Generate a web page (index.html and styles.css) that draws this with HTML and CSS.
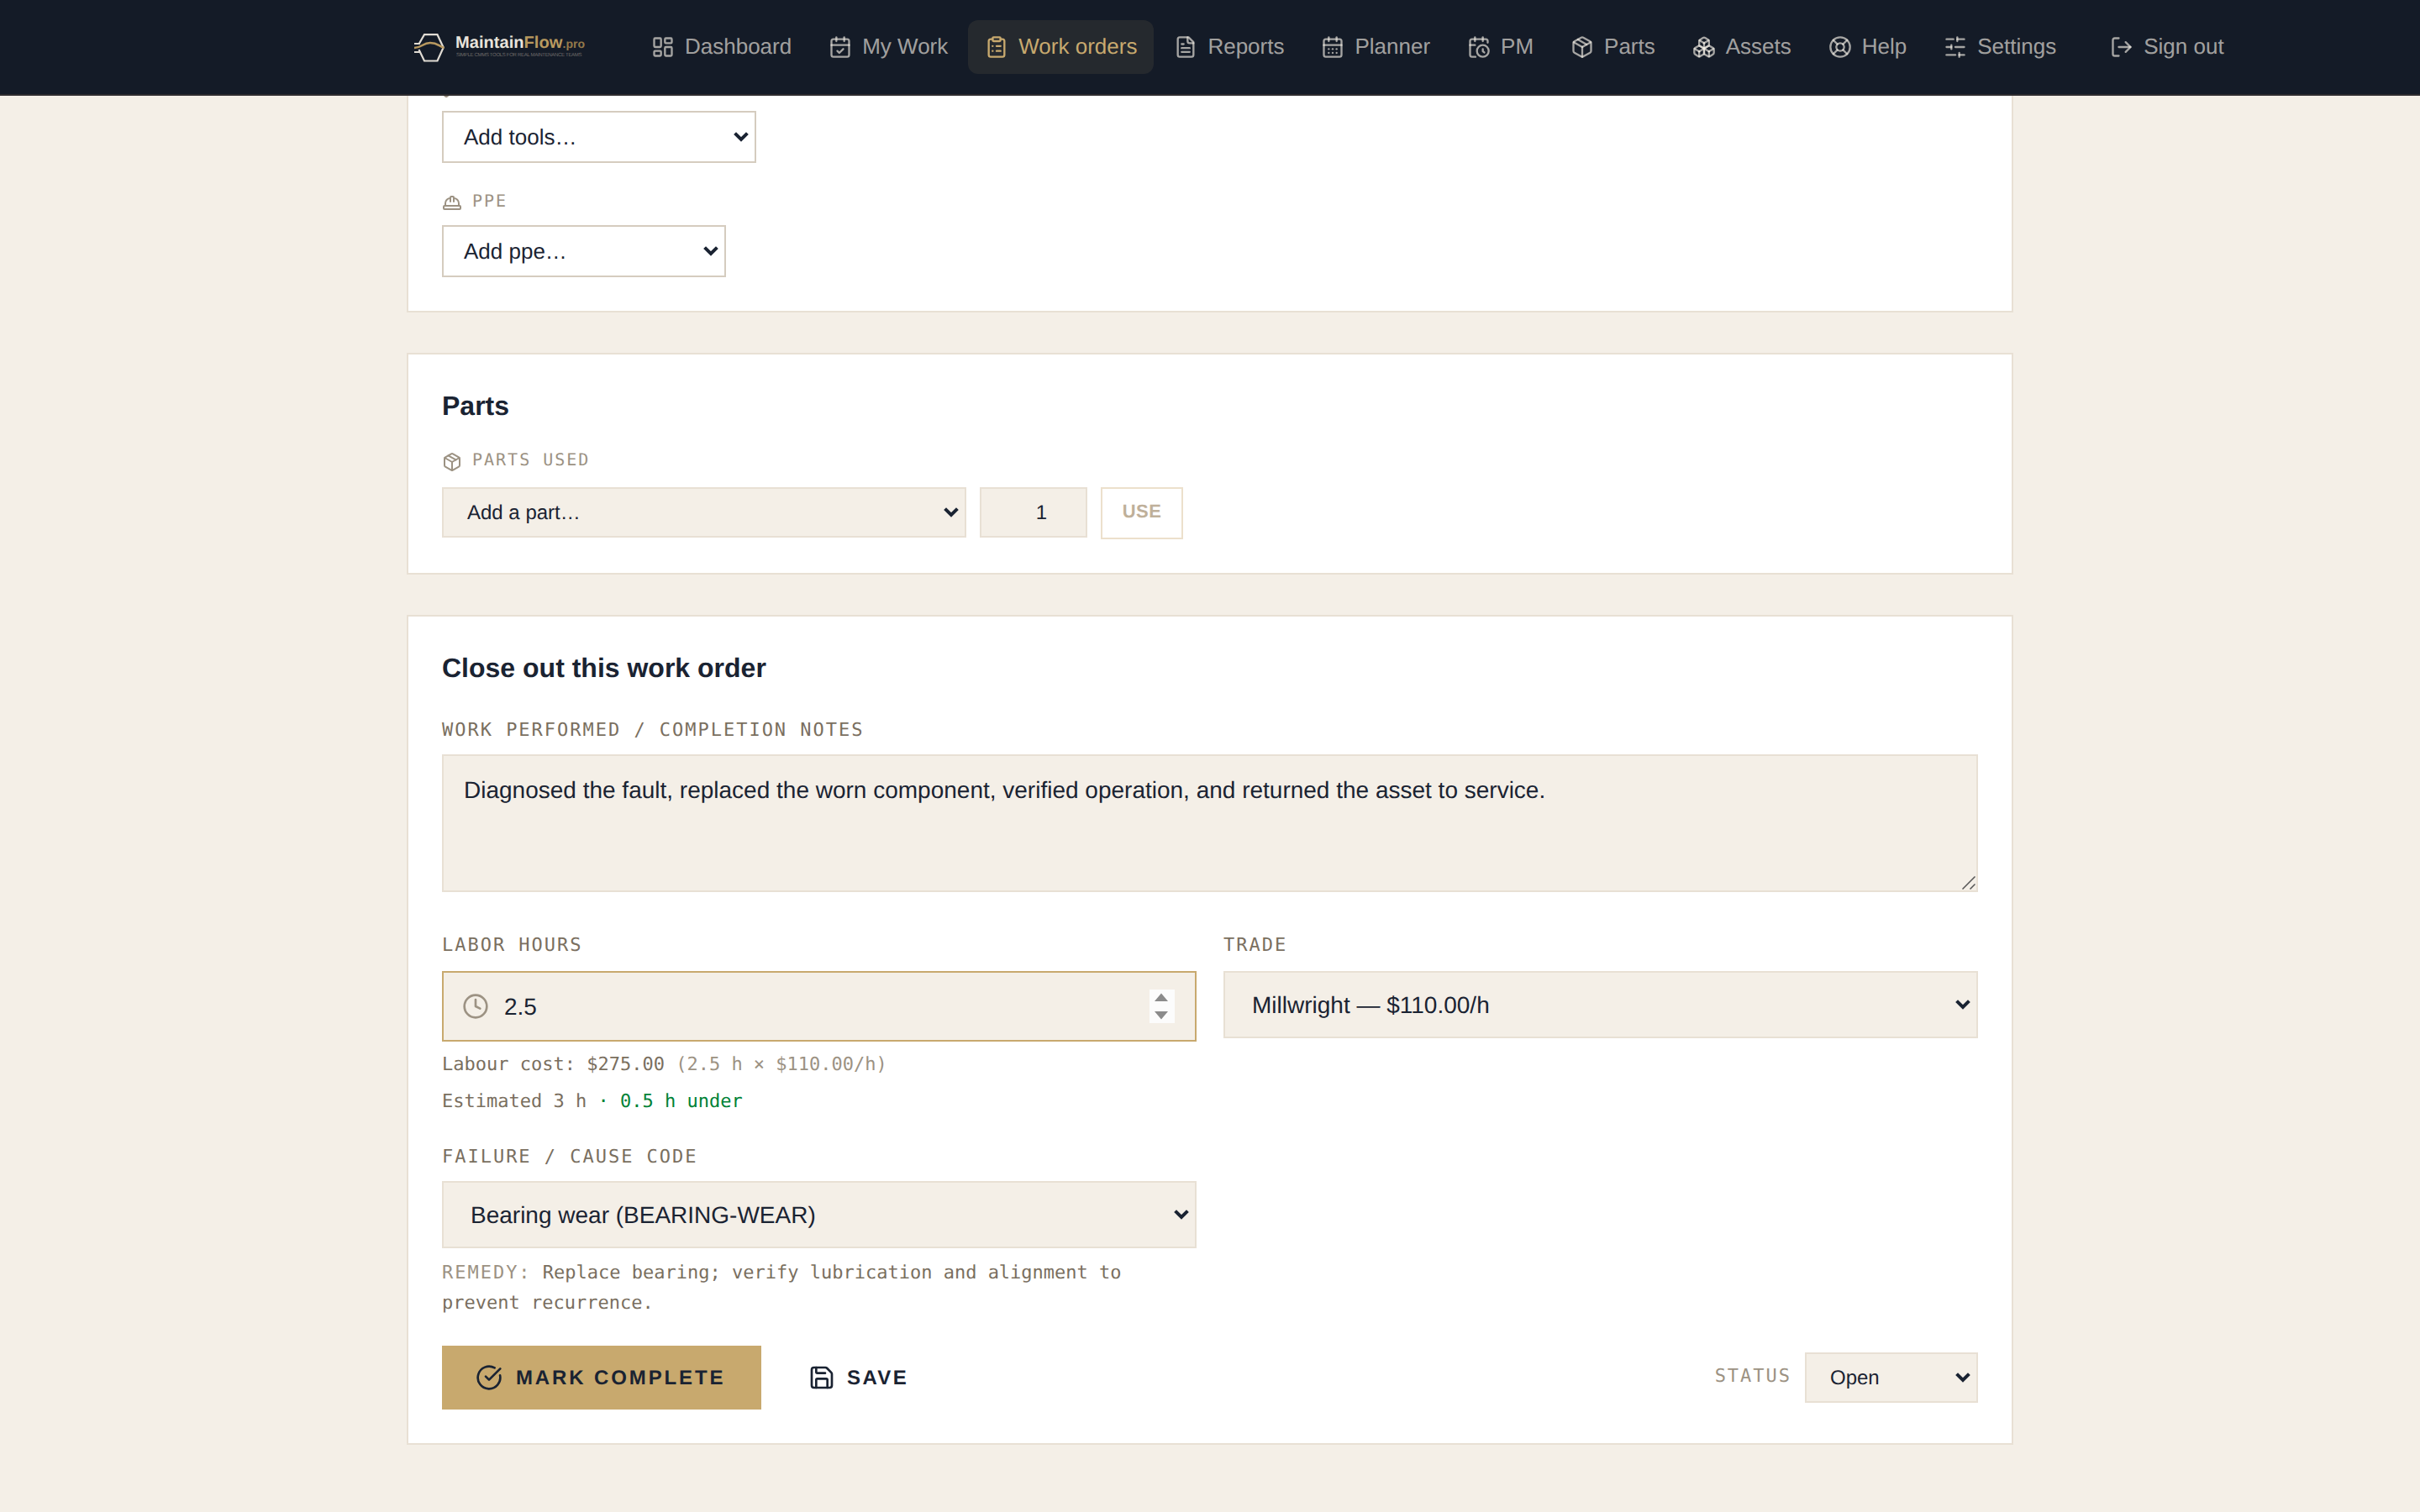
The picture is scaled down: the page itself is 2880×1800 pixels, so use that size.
FILE: index.html
```html
<!DOCTYPE html>
<html lang="en">
<head>
<meta charset="utf-8">
<title>MaintainFlow.pro</title>
<link rel="stylesheet" href="styles.css">
</head>
<body>
<header class="topbar">
  <svg class="logo" viewBox="0 0 230 40" aria-label="MaintainFlow.pro">
    <g fill="none" stroke="#e0dbd3" stroke-width="2.200">
      <path d="M14.5 16.5 21 5.2H36.5L43.700 20.5 36.5 36.500H21L14.500 23"/>
      <path d="M9 16h7M9 26h7.500"/>
      <path d="M9 21C18 21 19 15 28 15S38 19 44.500 21" stroke="#b8995f" stroke-width="2.600"/>
    </g>
    <text class="logo-name" x="58" y="21" textLength="81.500" lengthAdjust="spacingAndGlyphs">Maintain</text>
    <text class="logo-name logo-gold" x="139.500" y="21" textLength="46" lengthAdjust="spacingAndGlyphs">Flow</text>
    <text class="logo-tld" x="185.500" y="21" textLength="26.500" lengthAdjust="spacingAndGlyphs">.pro</text>
    <text class="logo-tag" x="59" y="31" textLength="149.500" lengthAdjust="spacing">SIMPLE CMMS TOOLS FOR REAL MAINTENANCE TEAMS</text>
  </svg>
  <nav class="nav">
    <a class="nav-item"><svg class="icon" viewBox="0 0 24 24"><rect width="7" height="9" x="3" y="3" rx="1"/><rect width="7" height="5" x="14" y="3" rx="1"/><rect width="7" height="9" x="14" y="12" rx="1"/><rect width="7" height="5" x="3" y="16" rx="1"/></svg><span>Dashboard</span></a>
    <a class="nav-item"><svg class="icon" viewBox="0 0 24 24"><path d="M8 2v4"/><path d="M16 2v4"/><rect width="18" height="18" x="3" y="4" rx="2"/><path d="M3 10h18"/><path d="m9 16 2 2 4-4"/></svg><span>My Work</span></a>
    <a class="nav-item nav-active"><svg class="icon" viewBox="0 0 24 24"><rect width="8" height="4" x="8" y="2" rx="1" ry="1"/><path d="M16 4h2a2 2 0 0 1 2 2v14a2 2 0 0 1-2 2H6a2 2 0 0 1-2-2V6a2 2 0 0 1 2-2h2"/><path d="M12 11h4"/><path d="M12 16h4"/><path d="M8 11h.01"/><path d="M8 16h.01"/></svg><span>Work orders</span></a>
    <a class="nav-item"><svg class="icon" viewBox="0 0 24 24"><path d="M15 2H6a2 2 0 0 0-2 2v16a2 2 0 0 0 2 2h12a2 2 0 0 0 2-2V7Z"/><path d="M14 2v4a2 2 0 0 0 2 2h4"/><path d="M10 9H8"/><path d="M16 13H8"/><path d="M16 17H8"/></svg><span>Reports</span></a>
    <a class="nav-item"><svg class="icon" viewBox="0 0 24 24"><path d="M8 2v4"/><path d="M16 2v4"/><rect width="18" height="18" x="3" y="4" rx="2"/><path d="M3 10h18"/><path d="M8 14h.01"/><path d="M12 14h.01"/><path d="M16 14h.01"/><path d="M8 18h.01"/><path d="M12 18h.01"/><path d="M16 18h.01"/></svg><span>Planner</span></a>
    <a class="nav-item"><svg class="icon" viewBox="0 0 24 24"><path d="M21 7.500V6a2 2 0 0 0-2-2H5a2 2 0 0 0-2 2v14a2 2 0 0 0 2 2h3.500"/><path d="M16 2v4"/><path d="M8 2v4"/><path d="M3 10h5"/><path d="M17.500 17.500 16 16.300V14"/><circle cx="16" cy="16" r="6"/></svg><span>PM</span></a>
    <a class="nav-item"><svg class="icon" viewBox="0 0 24 24"><path d="M11 21.730a2 2 0 0 0 2 0l7-4A2 2 0 0 0 21 16V8a2 2 0 0 0-1-1.730l-7-4a2 2 0 0 0-2 0l-7 4A2 2 0 0 0 3 8v8a2 2 0 0 0 1 1.730z"/><path d="M12 22V12"/><path d="M3.290 7 12 12l8.710-5"/><path d="m7.500 4.270 9 5.150"/></svg><span>Parts</span></a>
    <a class="nav-item"><svg class="icon" viewBox="0 0 24 24"><path d="M2.970 12.920A2 2 0 0 0 2 14.630v3.240a2 2 0 0 0 .970 1.710l3 1.800a2 2 0 0 0 2.060 0L12 19v-5.500l-5-3-4.030 2.420Z"/><path d="m7 16.500-4.740-2.850"/><path d="m7 16.500 5-3"/><path d="M7 16.500v5.170"/><path d="M12 13.500V19l3.970 2.380a2 2 0 0 0 2.060 0l3-1.800a2 2 0 0 0 .970-1.710v-3.240a2 2 0 0 0-.970-1.710L17 10.500l-5 3Z"/><path d="m17 16.500-5-3"/><path d="m17 16.500 4.740-2.850"/><path d="M17 16.500v5.170"/><path d="M7.970 4.420A2 2 0 0 0 7 6.130v4.370l5 3 5-3V6.130a2 2 0 0 0-.970-1.710l-3-1.800a2 2 0 0 0-2.060 0l-3 1.800Z"/><path d="M12 8 7.260 5.150"/><path d="m12 8 4.740-2.850"/><path d="M12 13.500V8"/></svg><span>Assets</span></a>
    <a class="nav-item"><svg class="icon" viewBox="0 0 24 24"><circle cx="12" cy="12" r="10"/><path d="m4.930 4.930 4.240 4.240"/><path d="m14.830 9.170 4.240-4.240"/><path d="m14.830 14.830 4.240 4.240"/><path d="m9.170 14.830-4.240 4.240"/><circle cx="12" cy="12" r="4"/></svg><span>Help</span></a>
    <a class="nav-item"><svg class="icon" viewBox="0 0 24 24"><path d="M21 4h-7"/><path d="M10 4H3"/><path d="M21 12h-9"/><path d="M8 12H3"/><path d="M21 20h-5"/><path d="M12 20H3"/><path d="M14 2v4"/><path d="M8 10v4"/><path d="M16 18v4"/></svg><span>Settings</span></a>
    <a class="nav-item nav-signout"><svg class="icon" viewBox="0 0 24 24"><path d="M9 21H5a2 2 0 0 1-2-2V5a2 2 0 0 1 2-2h4"/><path d="m16 17 5-5-5-5"/><path d="M21 12H9"/></svg><span>Sign out</span></a>
  </nav>
</header>

<main class="page">
  <section class="card card-tools">
    <div class="mini-label"><svg class="icon" viewBox="0 0 24 24"><path d="M14.700 6.300a1 1 0 0 0 0 1.400l1.600 1.600a1 1 0 0 0 1.400 0l3.770-3.770a6 6 0 0 1-7.940 7.940l-6.910 6.910a2.120 2.120 0 0 1-3-3l6.910-6.910a6 6 0 0 1 7.940-7.940l-3.760 3.760z"/></svg></div>
    <div class="select select-white select-tools"><span>Add tools…</span><svg class="chevron" viewBox="0 0 18 12"><path d="M1.600 1.600 9 9l7.400-7.400"/></svg></div>
    <div class="mini-label ppe-label"><svg class="icon" viewBox="0 0 24 24"><path d="M10 10V5a1 1 0 0 1 1-1h2a1 1 0 0 1 1 1v5"/><path d="M14 6a6 6 0 0 1 6 6v3"/><path d="M4 15v-3a6 6 0 0 1 6-6"/><rect x="2" y="15" width="20" height="4" rx="1"/></svg><span>PPE</span></div>
    <div class="select select-white select-ppe"><span>Add ppe…</span><svg class="chevron" viewBox="0 0 18 12"><path d="M1.600 1.600 9 9l7.400-7.400"/></svg></div>
  </section>

  <section class="card">
    <h2>Parts</h2>
    <div class="mini-label parts-label"><svg class="icon" viewBox="0 0 24 24"><path d="M11 21.730a2 2 0 0 0 2 0l7-4A2 2 0 0 0 21 16V8a2 2 0 0 0-1-1.730l-7-4a2 2 0 0 0-2 0l-7 4A2 2 0 0 0 3 8v8a2 2 0 0 0 1 1.730z"/><path d="M12 22V12"/><path d="M3.290 7 12 12l8.710-5"/><path d="m7.500 4.270 9 5.150"/></svg><span>PARTS USED</span></div>
    <div class="parts-row">
      <div class="select select-small select-part"><span>Add a part…</span><svg class="chevron" viewBox="0 0 18 12"><path d="M1.600 1.600 9 9l7.400-7.400"/></svg></div>
      <div class="qty">1</div>
      <div class="use">USE</div>
    </div>
  </section>

  <section class="card">
    <h2>Close out this work order</h2>
    <div class="label notes-label">WORK PERFORMED / COMPLETION NOTES</div>
    <div class="notes">Diagnosed the fault, replaced the worn component, verified operation, and returned the asset to service.<svg class="grip" viewBox="0 0 16 16"><path d="M.5 15.500l15-15M9.500 15.500l6-6"/></svg></div>
    <div class="columns">
      <div>
        <div class="label labor-label">LABOR HOURS</div>
        <div class="hours">
          <svg class="icon" viewBox="0 0 24 24"><circle cx="12" cy="12" r="10"/><path d="M12 6v6l4 2"/></svg>
          <span>2.5</span>
          <svg class="spinner" viewBox="0 0 30 40"><path d="M14 4.500 22 14H6zM6 26h16l-8 9.500z"/></svg>
        </div>
        <p class="hint cost">Labour cost: $275.00 <span class="muted">(2.5 h × $110.00/h)</span></p>
        <p class="hint">Estimated 3 h <span class="good">· 0.5 h under</span></p>
      </div>
      <div>
        <div class="label labor-label">TRADE</div>
        <div class="select select-large"><span>Millwright — $110.00/h</span><svg class="chevron" viewBox="0 0 18 12"><path d="M1.600 1.600 9 9l7.400-7.400"/></svg></div>
      </div>
      <div class="cause">
        <div class="label cause-label">FAILURE / CAUSE CODE</div>
        <div class="select select-large"><span>Bearing wear (BEARING-WEAR)</span><svg class="chevron" viewBox="0 0 18 12"><path d="M1.600 1.600 9 9l7.400-7.400"/></svg></div>
        <p class="hint remedy"><span class="muted remedy-key">REMEDY:</span> Replace bearing; verify lubrication and alignment to prevent recurrence.</p>
      </div>
    </div>
    <div class="actions">
      <div class="btn btn-primary"><svg class="icon" viewBox="0 0 24 24"><path d="M21.801 10A10 10 0 1 1 17 3.335"/><path d="m9 11 3 3L22 4"/></svg><span>MARK COMPLETE</span></div>
      <div class="btn btn-save"><svg class="icon" viewBox="0 0 24 24"><path d="M15.200 3a2 2 0 0 1 1.400.6l3.800 3.800a2 2 0 0 1 .6 1.400V19a2 2 0 0 1-2 2H5a2 2 0 0 1-2-2V5a2 2 0 0 1 2-2z"/><path d="M17 21v-7a1 1 0 0 0-1-1H8a1 1 0 0 0-1 1v7"/><path d="M7 3v4a1 1 0 0 0 1 1h7"/></svg><span>SAVE</span></div>
      <div class="status">
        <span class="status-label">STATUS</span>
        <div class="select select-small select-status"><span>Open</span><svg class="chevron" viewBox="0 0 18 12"><path d="M1.600 1.600 9 9l7.400-7.400"/></svg></div>
      </div>
    </div>
  </section>
</main>
</body>
</html>
```

FILE: styles.css
```css
:root {
  --ink: #1a2332;
  --cream: #f4efe7;
  --line: #e8e0d4;
  --gold: #c8a96e;
  --stone: #7a6f5f;
  --muted: #9c9283;
}

* { box-sizing: border-box; }

body {
  margin: 0;
  height: 1800px;
  overflow: hidden;
  background: var(--cream);
  color: var(--ink);
  font-family: "Liberation Sans", Arial, sans-serif;
  text-rendering: geometricPrecision;
}

p, h2 { margin: 0; }

.icon {
  flex: none;
  fill: none;
  stroke: currentColor;
  stroke-width: 2;
  stroke-linecap: round;
  stroke-linejoin: round;
}

/* Top bar */
.topbar {
  position: fixed;
  inset: 0 0 auto 0;
  z-index: 1;
  display: flex;
  align-items: center;
  height: 114px;
  padding-left: 484px;
  background: #141b27;
  border-bottom: 2px solid #2e2c2f;
}

.logo { flex: none; width: 230px; height: 40px; margin-right: 41px; }
.logo-name { font-size: 20px; font-weight: 700; fill: #e9e4dc; }
.logo-gold { fill: #b8995f; }
.logo-tld { font-size: 14px; font-weight: 700; fill: #94794a; }
.logo-tag { font-size: 6px; fill: #706d6b; }

.nav { display: flex; gap: 4px; }

.nav-item {
  display: flex;
  align-items: center;
  gap: 12px;
  height: 64px;
  padding: 0 20px;
  border-radius: 12px;
  color: rgba(244, 239, 230, .65);
  font-size: 26px;
  white-space: nowrap;
}

.nav-item span { padding-bottom: 2px; }
.nav-item .icon { width: 28px; height: 28px; }
.nav-active { background: rgba(200, 169, 110, .1); color: var(--gold); }
.nav-signout { margin-left: 20px; }

/* Cards */
.page {
  display: flex;
  flex-direction: column;
  gap: 48px;
  width: 1912px;
  margin: 0 auto;
  padding-top: 52px;
}

.card { padding: 40px; background: #fff; border: 2px solid var(--line); }

h2 { font-size: 32px; line-height: 42px; font-weight: 700; }

.mini-label {
  display: flex;
  gap: 12px;
  height: 24px;
  color: var(--muted);
  font: 20px/18px "DejaVu Sans Mono", monospace;
  letter-spacing: .1em;
}

.mini-label .icon { width: 24px; height: 24px; }

.select {
  display: flex;
  align-items: center;
  justify-content: space-between;
  border: 2px solid var(--line);
  background: var(--cream);
  padding-right: 7px;
}

.chevron { width: 18px; height: 12px; fill: none; stroke: var(--ink); stroke-width: 4; }

.select-white { height: 62px; padding-left: 24px; border-color: #d5ccbf; background: #fff; font-size: 26px; }
.select-small { height: 60px; padding-left: 28px; font-size: 24px; }
.select-large { height: 80px; padding-left: 32px; font-size: 28px; }
.select-small span, .select-large span { padding-top: 2px; }

.select-tools { width: 374px; margin-top: 14px; }
.select-ppe { width: 338px; margin-top: 14px; }
.ppe-label { margin-top: 36px; }

.parts-label { margin: 34px 0 18px; }
.parts-row { display: flex; gap: 16px; }
.select-part { width: 624px; }

.qty {
  width: 128px;
  height: 60px;
  padding: 0 46px 0 0;
  border: 2px solid var(--line);
  background: var(--cream);
  font-size: 24px;
  line-height: 57px;
  text-align: right;
}

.use {
  width: 98px;
  height: 62px;
  border: 2px solid #ece0cc;
  color: #bfb09a;
  font-size: 22px;
  font-weight: 700;
  line-height: 54px;
  letter-spacing: .02em;
  text-align: center;
}

/* Close-out form */
.label {
  color: var(--stone);
  font: 22px/24px "DejaVu Sans Mono", monospace;
  letter-spacing: .09em;
}

.notes-label { margin: 42px 0 16px; }
.labor-label { margin-bottom: 18px; }
.cause-label { margin-bottom: 16px; }

.notes {
  position: relative;
  height: 164px;
  padding: 19px 24px;
  border: 2px solid var(--line);
  background: var(--cream);
  font-size: 28px;
  line-height: 44px;
}

.grip {
  position: absolute;
  right: 1px;
  bottom: 1px;
  width: 16px;
  height: 16px;
  fill: none;
  stroke: #555;
  stroke-width: 1.5;
}

.columns {
  display: grid;
  grid-template-columns: 1fr 1fr;
  gap: 36px 32px;
  margin-top: 52px;
}

.hours {
  display: flex;
  align-items: center;
  height: 84px;
  padding: 0 24px 0 22px;
  border: 2px solid var(--gold);
  background: var(--cream);
  font-size: 28px;
}

.hours span { padding-top: 1px; }
.hours .icon { width: 32px; height: 32px; margin-right: 18px; color: var(--muted); }
.spinner { width: 30px; height: 40px; margin-left: auto; background: #fcfcfc; fill: #8b8b8b; }

.hint {
  margin-top: 8px;
  color: var(--stone);
  font: 22px/36px "DejaVu Sans Mono", monospace;
}

.cost { margin-top: 10px; }
.muted { color: var(--muted); }
.good { color: #008236; }
.remedy { margin-top: 12px; }
.remedy-key { letter-spacing: .09em; }

.actions { display: flex; align-items: center; margin-top: 32px; }

.btn {
  display: flex;
  align-items: center;
  gap: 16px;
  height: 76px;
  padding: 0 40px;
  font-size: 24px;
  font-weight: 700;
  letter-spacing: .12em;
}

.btn span { padding-top: 1px; }
.btn .icon { width: 32px; height: 32px; }
.btn-primary { width: 380px; margin-right: 16px; background: var(--gold); }
.btn-save { gap: 14px; letter-spacing: .1em; }

.status { display: flex; align-items: center; gap: 16px; margin-left: auto; }
.status-label {
  padding-bottom: 2px;
  color: var(--muted);
  font: 22px/24px "DejaVu Sans Mono", monospace;
  letter-spacing: .09em;
}
.select-status { width: 206px; }
```
